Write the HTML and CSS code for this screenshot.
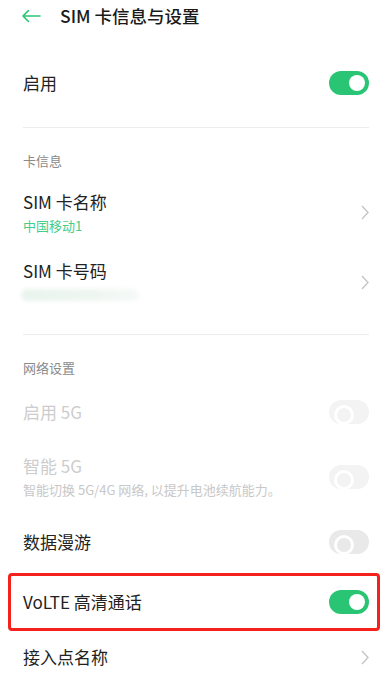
FILE: index.html
```html
<!DOCTYPE html>
<html lang="zh-CN">
<head>
  <meta charset="UTF-8" />
  <meta name="viewport" content="width=device-width, initial-scale=1.0"/>
  <title>SIM 卡信息与设置</title>
  <link rel="stylesheet" href="styles.css">
</head>
<body>
  <div class="header">
    <svg class="back" width="20" height="14" viewBox="0 0 20 14">
      <path d="M19 7H2M7.5 1.5L2 7l5.5 5.5" fill="none" stroke="#2ac574" stroke-width="1.6" stroke-linecap="round" stroke-linejoin="round"/>
    </svg>
    <h1>SIM 卡信息与设置</h1>
  </div>

  <div class="row first">
    <span class="label">启用</span>
    <span class="switch on"></span>
  </div>
  <div class="divider"></div>

  <div class="group-title">卡信息</div>
  <div class="row two">
    <div>
      <div class="label">SIM 卡名称</div>
      <div class="sub green">中国移动1</div>
    </div>
    <svg class="chev" width="8" height="15" viewBox="0 0 8 15"><path d="M1 1l6 6.5L1 14" fill="none" stroke="#c6c6c6" stroke-width="1.4"/></svg>
  </div>
  <div class="row two second">
    <div>
      <div class="label">SIM 卡号码</div>
      <div class="blurred"></div>
    </div>
    <svg class="chev" width="8" height="15" viewBox="0 0 8 15"><path d="M1 1l6 6.5L1 14" fill="none" stroke="#c6c6c6" stroke-width="1.4"/></svg>
  </div>
  <div class="divider lower"></div>

  <div class="group-title">网络设置</div>
  <div class="row single disabled">
    <span class="label">启用 5G</span>
    <span class="switch off dim"></span>
  </div>
  <div class="row two smart disabled">
    <div>
      <div class="label">智能 5G</div>
      <div class="sub">智能切换 5G/4G 网络, 以提升电池续航能力。</div>
    </div>
    <span class="switch off dim"></span>
  </div>
  <div class="row single roam">
    <span class="label">数据漫游</span>
    <span class="switch off"></span>
  </div>

  <div class="highlight">
    <div class="row volte">
      <span class="label">VoLTE 高清通话</span>
      <span class="switch on"></span>
    </div>
  </div>

  <div class="row apn">
    <span class="label">接入点名称</span>
    <svg class="chev" width="8" height="15" viewBox="0 0 8 15"><path d="M1 1l6 6.5L1 14" fill="none" stroke="#c6c6c6" stroke-width="1.4"/></svg>
  </div>
</body>
</html>
```

FILE: styles.css
```css
* {
  margin: 0;
  padding: 0;
  box-sizing: border-box;
}
body {
  background: #fff;
  font-family: "Noto Sans CJK SC", "Noto Sans", sans-serif;
  color: #222;
  width: 391px;
  overflow: hidden;
}
.header {
  height: 32px;
  display: flex;
  align-items: center;
  padding-left: 21px;
}
.header .back {
  margin-right: 19px;
}
.header h1 {
  font-size: 17.5px;
  font-weight: 500;
  line-height: 24px;
  color: #1a1a1a;
}
.row {
  display: flex;
  align-items: center;
  justify-content: space-between;
  padding: 0 22px 0 23px;
}
.row.first {
  margin-top: 22px;
  height: 58px;
}
.label {
  font-size: 17px;
  line-height: 24px;
}
.sub {
  font-size: 13px;
  line-height: 18px;
  margin-top: 3px;
  color: #c8c8c8;
}
.sub.green {
  color: #46cd8a;
}
.divider {
  height: 1px;
  background: #ececec;
  margin: 15px 22px 0 23px;
}
.divider.lower {
  margin-top: 21px;
}
.group-title {
  font-size: 13px;
  line-height: 18px;
  color: #8a8a8a;
  padding: 24px 23px 8px;
}
.row.two {
  padding-top: 12px;
  padding-bottom: 12px;
}
.row.two.second .chev {
  margin-top: 4px;
}
.blurred {
  width: 118px;
  height: 12px;
  margin-top: 6px;
  margin-left: -2px;
  border-radius: 6px;
  background: linear-gradient(90deg, #e9f4ee, #eef6f1 60%, #f5f9f7);
  filter: blur(2px);
}
.row.single {
  height: 54px;
}
.row.roam {
  height: 56px;
}
.row.smart {
  padding-top: 15px;
  padding-bottom: 15px;
}
.disabled .label {
  color: #cdcdcd;
}
.switch {
  position: relative;
  width: 40px;
  height: 24px;
  border-radius: 12px;
  flex-shrink: 0;
}
.switch.on {
  background: #2ac574;
}
.switch.on::after {
  content: "";
  position: absolute;
  right: 4px;
  top: 4px;
  width: 16px;
  height: 16px;
  border-radius: 50%;
  background: #fff;
}
.switch.off {
  background: #e9e9e9;
}
.switch.off::after {
  content: "";
  position: absolute;
  left: 5px;
  top: 5px;
  width: 14px;
  height: 14px;
  border-radius: 50%;
  border: 3px solid #fff;
}
.switch.dim {
  background: #f3f3f3;
}
.chev {
  flex-shrink: 0;
  margin-right: 0;
}
.highlight {
  margin: 3px 11px 0 8px;
  border: 3px solid #f5211c;
  border-radius: 4px;
}
.row.volte {
  height: 52px;
  padding: 0 8px 0 12px;
}
.row.apn {
  height: 52px;
}
```
